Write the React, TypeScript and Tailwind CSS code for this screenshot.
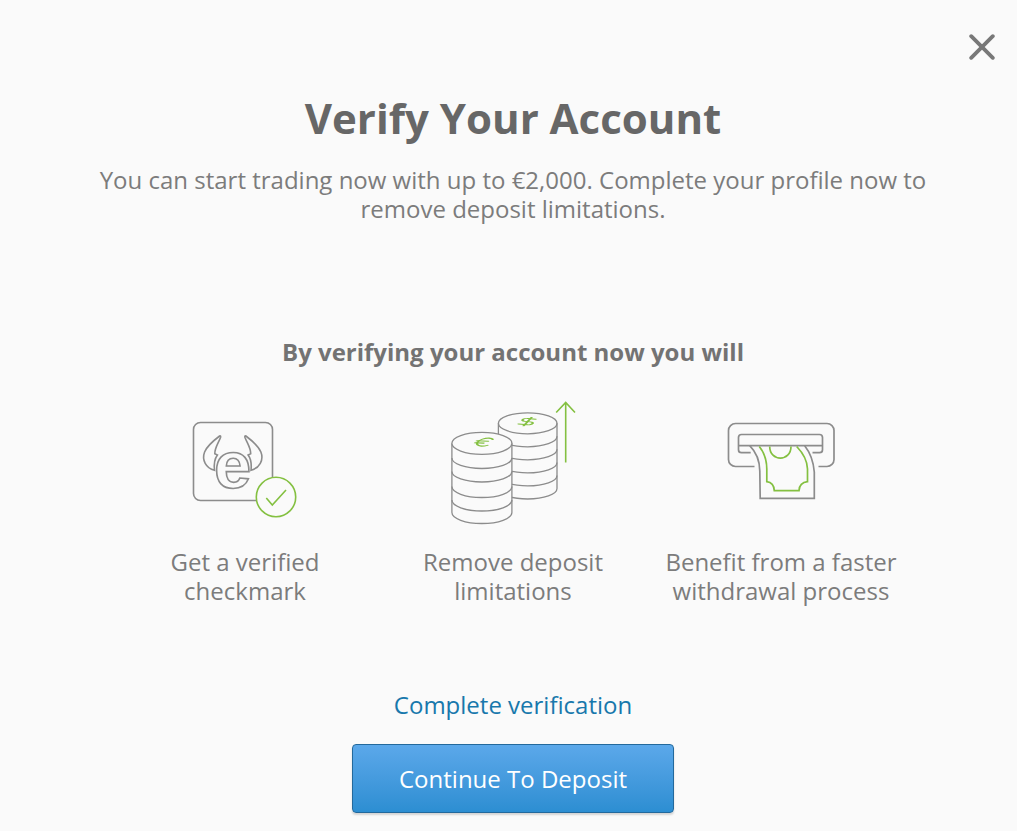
import type { ReactNode } from 'react';
import { DollarSign, Euro } from 'lucide-react';

interface Benefit {
  icon: ReactNode;
  label: string;
}

function CheckmarkIcon() {
  return (
    <svg width="108" height="124" viewBox="0 0 108 124" fill="none" stroke="#8c8c8c" strokeWidth="1.6" aria-hidden="true">
      <rect x="2.5" y="21.5" width="79" height="78" rx="7" />
      {/* horns */}
      <path d="M28.6 35C22 40 16 45 13.6 51C10.5 59 15 67 23.5 69.3C22.8 63 23.4 58 26.4 54L23.8 52.8C23.6 47 27.5 42 29.6 36.2C29.8 35.2 29.4 34.6 28.6 35Z" />
      <path d="M54.9 35C61.5 40 67.5 45 69.9 51C73 59 68.5 67 60 69.3C60.7 63 60.1 58 57.1 54L59.7 52.8C59.9 47 56 42 53.9 36.2C53.7 35.2 54.1 34.6 54.9 35Z" />
      <text
        x="41.7"
        y="87"
        textAnchor="middle"
        fontSize="67"
        className="font-['Liberation_Sans',sans-serif] font-bold"
        fill="#fafafa"
      >
        e
      </text>
      <circle cx="85" cy="96" r="19.7" fill="#fafafa" stroke="#84c041" />
      <path d="M75.3 97L81.3 104L95 89" stroke="#84c041" />
    </svg>
  );
}

function CoinsIcon() {
  return (
    <svg width="128" height="124" viewBox="0 0 128 124" fill="none" stroke="#8c8c8c" strokeWidth="1.3" aria-hidden="true">
      <path d="M49.4 22.3V87.5A29.3 10.5 0 0 0 108 87.5V22.3" />
      <ellipse cx="78.7" cy="22.3" rx="29.3" ry="10.5" />
      <path d="M49.4 35.3A29.3 10.5 0 0 0 108 35.3M49.4 48.3A29.3 10.5 0 0 0 108 48.3M49.4 61.4A29.3 10.5 0 0 0 108 61.4M49.4 74.4A29.3 10.5 0 0 0 108 74.4" />
      <path d="M2.9 42.3V111.5A30 11 0 0 0 62.9 111.5V42.3" fill="#fafafa" />
      <ellipse cx="32.9" cy="42.3" rx="30" ry="11" fill="#fafafa" />
      <path d="M2.9 57A30 10.5 0 0 0 62.9 57M2.9 70.5A30 10.5 0 0 0 62.9 70.5M2.9 85.5A30 11 0 0 0 62.9 85.5M2.9 99A30 11 0 0 0 62.9 99" />
      <g transform="matrix(0.95 0.04 -0.45 0.5 28.5 34.6)">
        <Euro color="#84c041" strokeWidth={2.2} />
      </g>
      <g transform="matrix(1.05 0.1 -0.4 0.42 70.8 14.4)">
        <DollarSign color="#84c041" strokeWidth={2.2} />
      </g>
      <path d="M116.7 61.5V1.5M107.2 11.5L116.7 1.5L126 11.5" stroke="#84c041" strokeWidth="1.6" />
    </svg>
  );
}

function WithdrawIcon() {
  return (
    <svg width="110" height="124" viewBox="0 0 110 124" fill="none" stroke="#8c8c8c" strokeWidth="1.7" aria-hidden="true">
      <path d="M28.5 65.5H9.5A7 7 0 0 1 2.5 58.5V29.5A7 7 0 0 1 9.5 22.5H101A7 7 0 0 1 108 29.5V58.5A7 7 0 0 1 101 65.5H92.5" />
      <path d="M24.7 51.7H15.5A3 3 0 0 1 12.5 48.7V36.5A3 3 0 0 1 15.5 33.5H93.5A3 3 0 0 1 96.5 36.5V48.7A3 3 0 0 1 93.5 51.7H86.5" />
      <path d="M12.5 44.7H96.5" />
      <path d="M23.7 44.7C31 52 33.7 60 33.8 70L34.2 97.4H88.3V71C87.5 61 84.5 52 78.7 44.7" />
      <g stroke="#84c041">
        <path d="M33.3 45.5C38.5 52 40.8 60 40.8 68V80.7C45 81.2 48 83.5 48.3 89.7H73C73.3 84 76.5 81.2 81.5 80.7V68C81.2 59 77 52 70.7 45.5" />
        <path d="M43.7 45.5C43.7 61 65 61 65 45.5" />
      </g>
    </svg>
  );
}

const benefits: Benefit[] = [
  { icon: <CheckmarkIcon />, label: 'Get a verified checkmark' },
  { icon: <CoinsIcon />, label: 'Remove deposit limitations' },
  { icon: <WithdrawIcon />, label: 'Benefit from a faster withdrawal process' },
];

export default function App() {
  return (
    <div className="min-h-screen bg-[#fafafa] pb-[18px] font-['Open_Sans',sans-serif] text-[24px] leading-[29px] text-[#7c7c7c]">
      <header className="flex justify-end pt-[34px] pr-[22px]">
        <button type="button" aria-label="Close" className="cursor-pointer">
          <svg width="26" height="26" viewBox="0 0 26 26" stroke="#787878" strokeWidth="3.8" strokeLinecap="round">
            <path d="M2.2 2.2L23.8 23.8M23.8 2.2L2.2 23.8" />
          </svg>
        </button>
      </header>

      <main className="flex flex-col items-center pl-[9px] text-center">
        <h1 className="mt-[30px] text-[42px] leading-[56px] font-bold text-[#676767]">Verify Your Account</h1>
        <p className="mt-[19px] max-w-[860px]">
          You can start trading now with up to €2,000. Complete your profile now to remove deposit limitations.
        </p>

        <h2 className="mt-[114px] font-bold text-[#737373]">By verifying your account now you will</h2>

        {/* Benefits */}
        <ul className="mt-[35px] grid w-full max-w-[804px] grid-cols-3">
          {benefits.map((benefit) => (
            <li key={benefit.label} className="flex flex-col items-center px-4">
              {benefit.icon}
              <p className="mt-[22px]">{benefit.label}</p>
            </li>
          ))}
        </ul>

        {/* Actions */}
        <a href="#verify" className="mt-[85px] text-[#1878ac] hover:underline">
          Complete verification
        </a>
        <button
          type="button"
          className="mt-[25px] cursor-pointer rounded-[4px] border border-[#23699c] bg-linear-to-b from-[#5ba8ea] to-[#2c8ed2] px-[46px] py-[19px] text-white shadow-[0_2px_2px_rgba(0,0,0,0.15)]"
        >
          Continue To Deposit
        </button>
      </main>
    </div>
  );
}
